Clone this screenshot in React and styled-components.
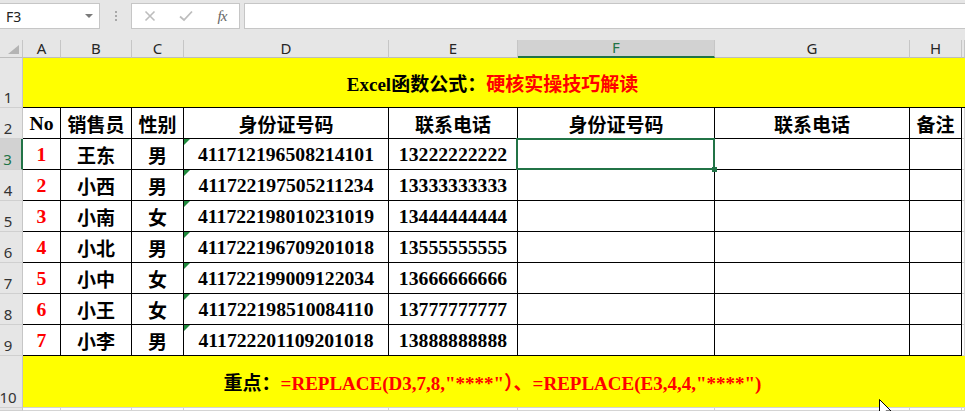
import React from 'react';
import styled, { createGlobalStyle, css } from 'styled-components';

const SERIF = `"Liberation Serif", "Noto Sans CJK SC", serif`;
const UI = `"Noto Sans", "Liberation Sans", sans-serif`;
const GREEN = '#217346';

const Global = createGlobalStyle`
  html, body { margin: 0; padding: 0; background: #fff; }
  body { font-family: ${UI}; }
`;

const Page = styled.div`
  position: relative;
  width: 965px;
  height: 411px;
  overflow: hidden;
  background: #e6e6e6;
  display: flex;
  flex-direction: column;
`;

const Toolbar = styled.div`
  flex: none;
  height: 40px;
  box-sizing: border-box;
  padding-top: 3px;
  display: flex;
  align-items: flex-start;
`;

const Box = styled.div`
  height: 26px;
  box-sizing: border-box;
  background: #fff;
  border: 1px solid #c6c6c6;
`;

const NameBox = styled(Box)`
  width: 100px;
  border-left: none;
  display: flex;
  align-items: center;
  justify-content: space-between;
  padding: 0 6px 0 6px;
  font-size: 14px;
  color: #222;
`;

const DropArrow = styled.span`
  width: 0;
  height: 0;
  border-left: 4px solid transparent;
  border-right: 4px solid transparent;
  border-top: 4px solid #7a7a7a;
`;

const Grip = styled.div`
  width: 31px;
  height: 26px;
  display: flex;
  flex-direction: column;
  align-items: center;
  justify-content: center;
  gap: 2px;
  span {
    width: 2px;
    height: 2px;
    background: #a8a8a8;
  }
`;

const FxBox = styled(Box)`
  width: 109px;
  display: grid;
  grid-template-columns: repeat(3, 36px);
  align-items: center;
  justify-items: center;
`;

const FxLabel = styled.span`
  font-family: "Liberation Serif", serif;
  font-style: italic;
  font-size: 15px;
  color: #666;
  letter-spacing: -1px;
`;

const FormulaInput = styled(Box)`
  flex: 1;
  margin-left: 4px;
  border-right: none;
`;

const Sheet = styled.div`
  flex: 1;
  display: grid;
  grid-template-columns: 23px 38px 71px 52px 205px 129px 197px 195px 52px 1fr;
  grid-template-rows: 18px 50px repeat(8, 31px) 52px 1fr;
  background: #fff;
`;

const Corner = styled.div`
  position: relative;
  background: #e6e6e6;
  border-right: 1px solid #c6c6c6;
  border-bottom: 1px solid #bdbdbd;
  box-sizing: border-box;
  &::after {
    content: '';
    position: absolute;
    right: 3px;
    bottom: 3px;
    width: 0;
    height: 0;
    border-left: 11px solid transparent;
    border-bottom: 9px solid #b4b4b4;
  }
`;

const ColHead = styled.div`
  box-sizing: border-box;
  background: #e6e6e6;
  border-right: 1px solid #c6c6c6;
  border-bottom: 1px solid #bdbdbd;
  display: flex;
  align-items: flex-end;
  justify-content: center;
  font-size: 15px;
  line-height: 17px;
  color: #262626;
  ${(p) =>
    p.$active &&
    css`
      background: #d2d2d2;
      color: ${GREEN};
      border-bottom: 2px solid ${GREEN};
    `}
`;

const RowHead = styled.div`
  box-sizing: border-box;
  background: #e6e6e6;
  border-right: 1px solid #c6c6c6;
  border-bottom: 1px solid #d0d0d0;
  display: flex;
  align-items: flex-end;
  justify-content: center;
  padding: 0 6px 1px 0;
  font-size: 15px;
  line-height: 17px;
  color: #333;
  overflow: hidden;
  ${(p) =>
    p.$active &&
    css`
      background: #d2d2d2;
      color: ${GREEN};
      border-right: 2px solid ${GREEN};
    `}
`;

const Banner = styled.div`
  grid-column: 2 / -1;
  box-sizing: border-box;
  background: #ffff00;
  border-bottom: 1px solid ${(p) => (p.$edge === 'dark' ? '#000' : '#d4d4d4')};
  display: flex;
  align-items: center;
  justify-content: center;
  padding-right: 3px;
  font-family: ${SERIF};
  font-weight: 700;
  font-size: 19px;
  color: #000;
  white-space: nowrap;
`;

const Red = styled.span`
  color: #ff0000;
`;

const Cell = styled.div`
  position: relative;
  box-sizing: border-box;
  border-right: 1px solid #000;
  border-bottom: 1px solid #000;
  display: flex;
  align-items: center;
  justify-content: center;
  font-family: ${SERIF};
  font-weight: 700;
  font-size: ${(p) => (p.$num ? '19.7px' : '19px')};
  color: ${(p) => (p.$red ? '#ff0000' : '#000')};
  white-space: nowrap;
  ${(p) =>
    p.$flag &&
    css`
      &::before {
        content: '';
        position: absolute;
        top: 0;
        left: 0;
        width: 0;
        height: 0;
        border-top: 6px solid #1f8a3c;
        border-right: 6px solid transparent;
      }
    `}
  ${(p) =>
    p.$selected &&
    css`
      &::after {
        content: '';
        position: absolute;
        top: -1px;
        left: -2px;
        right: -1px;
        bottom: -1px;
        border: 2px solid ${GREEN};
        z-index: 2;
      }
      &::before {
        content: '';
        position: absolute;
        right: -3px;
        bottom: -3px;
        width: 5px;
        height: 5px;
        background: ${GREEN};
        z-index: 3;
      }
    `}
`;

const Filler = styled.div`
  box-sizing: border-box;
  background: #fff;
  border-bottom: 1px solid #d4d4d4;
  border-right: 1px solid #d4d4d4;
`;

const Cursor = styled.svg`
  position: absolute;
  left: 879px;
  top: 399px;
  width: 13px;
  height: 20px;
  overflow: visible;
`;

const headers = ['销售员', '性别', '身份证号码', '联系电话', '身份证号码', '联系电话', '备注'];

const rows = [
  ['1', '王东', '男', '411712196508214101', '13222222222'],
  ['2', '小西', '男', '411722197505211234', '13333333333'],
  ['3', '小南', '女', '411722198010231019', '13444444444'],
  ['4', '小北', '男', '411722196709201018', '13555555555'],
  ['5', '小中', '女', '411722199009122034', '13666666666'],
  ['6', '小王', '女', '411722198510084110', '13777777777'],
  ['7', '小李', '男', '411722201109201018', '13888888888'],
];

const cols = ['A', 'B', 'C', 'D', 'E', 'F', 'G', 'H', ''];

export default function App() {
  return (
    <>
      <Global />
      <Page>
        <Toolbar>
          <NameBox>
            <span>F3</span>
            <DropArrow />
          </NameBox>
          <Grip>
            <span />
            <span />
            <span />
          </Grip>
          <FxBox>
            <svg width="12" height="12" viewBox="0 0 12 12">
              <path d="M1.5 1.5 L10.5 10.5 M10.5 1.5 L1.5 10.5" stroke="#bdbdbd" strokeWidth="1.6" fill="none" />
            </svg>
            <svg width="14" height="12" viewBox="0 0 14 12">
              <path d="M1 6.5 L5 10 L13 1.5" stroke="#bdbdbd" strokeWidth="1.8" fill="none" />
            </svg>
            <FxLabel>fx</FxLabel>
          </FxBox>
          <FormulaInput />
        </Toolbar>
        <Sheet>
          <Corner />
          {cols.map((c) => (
            <ColHead key={'h' + c} $active={c === 'F'}>
              {c}
            </ColHead>
          ))}

          <RowHead>1</RowHead>
          <Banner $edge="dark">
            <span>
              Excel函数公式：<Red>硬核实操技巧解读</Red>
            </span>
          </Banner>

          <RowHead>2</RowHead>
          <Cell $num>No</Cell>
          {headers.map((h, i) => (
            <Cell key={'t' + i}>{h}</Cell>
          ))}
          <Filler />

          {rows.map((r, i) => (
            <React.Fragment key={r[0]}>
              <RowHead $active={i === 0}>{i + 3}</RowHead>
              <Cell $red $num>{r[0]}</Cell>
              <Cell>{r[1]}</Cell>
              <Cell>{r[2]}</Cell>
              <Cell $flag $num>{r[3]}</Cell>
              <Cell $num>{r[4]}</Cell>
              <Cell $selected={i === 0} />
              <Cell />
              <Cell />
              <Filler />
            </React.Fragment>
          ))}

          <RowHead>10</RowHead>
          <Banner>
            <span>
              重点：<Red>=REPLACE(D3,7,8,"****"）、=REPLACE(E3,4,4,"****")</Red>
            </span>
          </Banner>

          <RowHead />
          {cols.map((c) => (
            <Filler key={'b' + c} />
          ))}
        </Sheet>
        <Cursor viewBox="0 0 13 20">
          <path d="M0.5 0.5 L0.5 16.5 L4.5 12.8 L7.2 19.2 L9.4 18.3 L6.8 12 L12 12 Z" fill="#fff" stroke="#000" strokeWidth="1" />
        </Cursor>
      </Page>
    </>
  );
}
